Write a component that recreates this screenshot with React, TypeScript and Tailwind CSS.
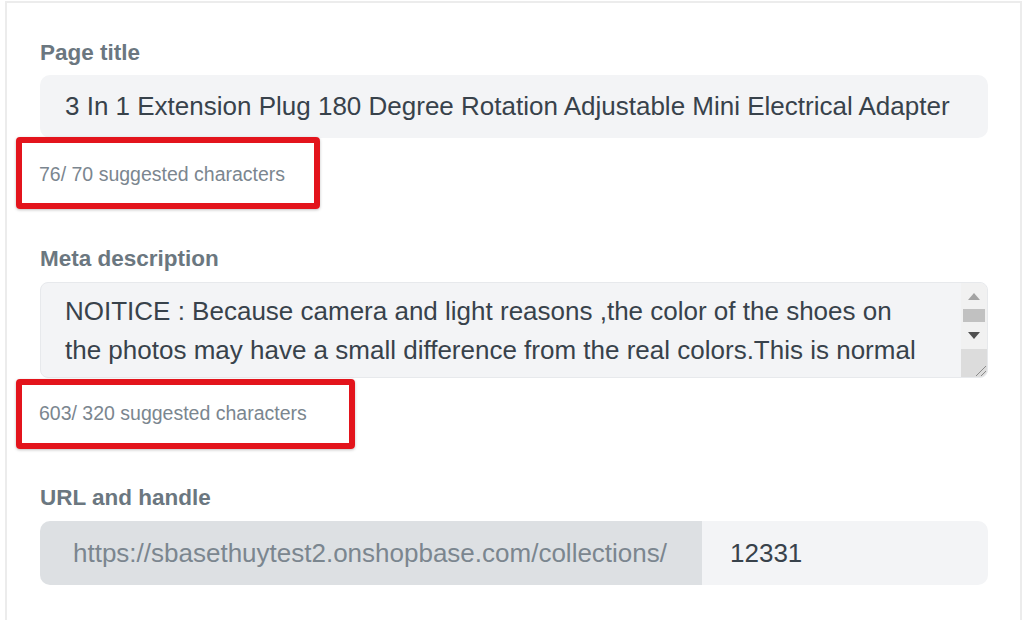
import React from 'react';

const font = { fontFamily: '"Liberation Sans", Arial, sans-serif' };

// red annotation frame drawn round the counter text
const CounterBox: React.FC<{ text: string; box: string }> = ({ text, box }) => (
  <div
    className={`${box} ml-[-24px] flex items-center pl-[17px] border-[6px] border-[#e3141c] rounded-[4px] shadow-[0_1px_3px_rgba(0,0,0,0.25)]`}
  >
    <span className="text-[19.5px] leading-none text-[#7b868f]">{text}</span>
  </div>
);

const FakeScrollbar: React.FC = () => (
  <div className="w-[26px] flex flex-col bg-[#f1f1f1]">
    <div className="h-[26px] flex items-center justify-center">
      <svg width="12" height="7" viewBox="0 0 12 7">
        <polygon points="6,0 12,7 0,7" fill="#a3a3a3" />
      </svg>
    </div>
    <div className="mx-[2px] h-[13px] bg-[#c1c1c1]" />
    <div className="h-[27px] flex items-center justify-center">
      <svg width="12" height="7" viewBox="0 0 12 7">
        <polygon points="0,0 12,0 6,7" fill="#505050" />
      </svg>
    </div>
    <div className="flex-1 bg-[#dcdcdc] flex items-end justify-end">
      <svg width="14" height="14" viewBox="0 0 14 14">
        <line x1="13" y1="3" x2="3" y2="13" stroke="#8a8a8a" strokeWidth="1" />
        <line x1="13" y1="8" x2="8" y2="13" stroke="#8a8a8a" strokeWidth="1" />
      </svg>
    </div>
  </div>
);

const App: React.FC = () => {
  return (
    <div className="w-[1024px] h-[620px] overflow-hidden bg-white pl-[5px] pr-[2px] pt-[1px]" style={font}>
      <div className="h-full border-2 border-b-0 border-[#ececec] pl-[33px] pr-[32px] pt-[37px]">
        <div className="text-[22.5px] leading-[25px] font-bold text-[#6b7780]">Page title</div>
        <div className="mt-[10px] h-[63px] rounded-[10px] bg-[#f3f4f6] flex items-center pl-[25px] text-[26px] text-[#38424b] whitespace-nowrap">
          3 In 1 Extension Plug 180 Degree Rotation Adjustable Mini Electrical Adapter
        </div>
        <CounterBox text="76/ 70 suggested characters" box="w-[304px] h-[72px] mt-[-1px] pt-[3px]" />

        <div className="mt-[37px] text-[22.5px] leading-[25px] font-bold text-[#6b7780]">Meta description</div>
        <div className="mt-[11px] h-[96px] rounded-[8px] bg-[#f3f4f6] border border-[#e7e9ec] flex overflow-hidden">
          <div className="flex-1 pl-[24px] pt-[9px] text-[26px] leading-[39px] text-[#38424b] whitespace-nowrap overflow-hidden">
            <div>NOITICE : Because camera and light reasons ,the color of the shoes on</div>
            <div>the photos may have a small difference from the real colors.This is normal</div>
          </div>
          <FakeScrollbar />
        </div>
        <CounterBox text="603/ 320 suggested characters" box="w-[339px] h-[70px] mt-[1px]" />

        <div className="mt-[36px] text-[22.5px] leading-[25px] font-bold text-[#6b7780]">URL and handle</div>
        <div className="mt-[11px] h-[64px] flex rounded-[10px] overflow-hidden text-[26px] whitespace-nowrap">
          <div className="w-[662px] bg-[#dde0e3] flex items-center pl-[33px] text-[#7b868f]">
            https://sbasethuytest2.onshopbase.com/collections/
          </div>
          <div className="flex-1 bg-[#f3f4f6] flex items-center pl-[28px] text-[#38424b]">12331</div>
        </div>
      </div>
    </div>
  );
};

export default App;
